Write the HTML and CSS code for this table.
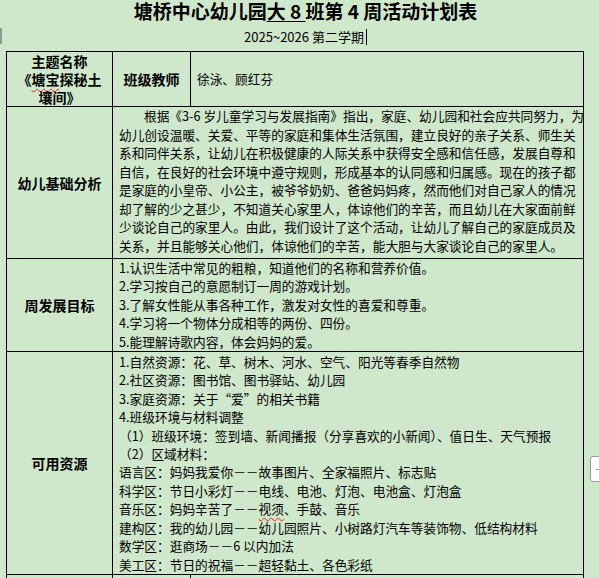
FILE: index.html
```html
<!DOCTYPE html>
<html lang="zh-CN">
<head>
<meta charset="utf-8">
<title>塘桥中心幼儿园大8班第4周活动计划表</title>
<link rel="stylesheet" href="styles.css">
</head>
<body>
<div class="page">
  <span class="edge-mark"></span>
  <header class="head">
    <h1 class="title">塘桥中心幼儿园<u>大 8 </u>班第 4 周活动计划表</h1>
    <div class="sub">2025~2026 第二学期<span class="caret"></span></div>
  </header>
  <table class="plan">
    <colgroup>
      <col class="c1"><col class="c2"><col class="c3">
    </colgroup>
    <tr class="r1">
      <td class="label">主题名称<br>《<span class="spell">塘宝</span>探秘土<br>壤间》</td>
      <td class="label">班级教师</td>
      <td class="plain">徐泳、顾红芬</td>
    </tr>
    <tr class="r2">
      <td class="label">幼儿基础分析</td>
      <td class="para" colspan="2">
        <div class="ln indent">根据《3-6 岁儿童学习与发展指南》指出，家庭、幼儿园和社会应共同努力，为</div>
        <div class="ln">幼儿创设温暖、关爱、平等的家庭和集体生活氛围，建立良好的亲子关系、师生关</div>
        <div class="ln">系和同伴关系，让幼儿在积极健康的人际关系中获得安全感和信任感，发展自尊和</div>
        <div class="ln">自信，在良好的社会环境中遵守规则，形成基本的认同感和归属感。现在的孩子都</div>
        <div class="ln">是家庭的小皇帝、小公主，被爷爷奶奶、爸爸妈妈疼，然而他们对自己家人的情况</div>
        <div class="ln">却了解的少之甚少，不知道关心家里人，体谅他们的辛苦，而且幼儿在大家面前鲜</div>
        <div class="ln">少谈论自己的家里人。由此，我们设计了这个活动，让幼儿了解自己的家庭成员及</div>
        <div class="ln">关系，并且能够关心他们，体谅他们的辛苦，能大胆与大家谈论自己的家里人。</div>
      </td>
    </tr>
    <tr class="r3">
      <td class="label">周发展目标</td>
      <td class="list" colspan="2">
        <div class="ln">1.认识生活中常见的粗粮，知道他们的名称和营养价值。</div>
        <div class="ln">2.学习按自己的意愿制订一周的游戏计划。</div>
        <div class="ln">3.了解女性能从事各种工作，激发对女性的喜爱和尊重。</div>
        <div class="ln">4.学习将一个物体分成相等的两份、四份。</div>
        <div class="ln">5.能理解诗歌内容，体会妈妈的爱。</div>
      </td>
    </tr>
    <tr class="r4">
      <td class="label">可用资源</td>
      <td class="list res" colspan="2">
        <div class="ln">1.自然资源：花、草、树木、河水、空气、阳光等春季自然物</div>
        <div class="ln">2.社区资源：图书馆、图书驿站、幼儿园</div>
        <div class="ln">3.家庭资源：关于“爱”的相关书籍</div>
        <div class="ln">4.班级环境与材料调整</div>
        <div class="ln">（1）班级环境：签到墙、新闻播报（分享喜欢的小新闻）、值日生、天气预报</div>
        <div class="ln">（2）区域材料：</div>
        <div class="ln">语言区：妈妈我爱你－－故事图片、全家福照片、标志贴</div>
        <div class="ln">科学区：节日小彩灯－－电线、电池、灯泡、电池盒、灯泡盒</div>
        <div class="ln">音乐区：妈妈辛苦了－－<span class="spell">视须</span>、手鼓、音乐</div>
        <div class="ln">建构区：我的幼儿园－－幼儿园照片、小树路灯汽车等装饰物、低结构材料</div>
        <div class="ln">数学区：逛商场－－6 以内加法</div>
        <div class="ln">美工区：节日的祝福－－超轻黏土、各色彩纸</div>
      </td>
    </tr>
    <tr class="r5">
      <td></td><td></td><td></td>
    </tr>
  </table>
  <div class="side-tab"><span></span></div>
</div>
</body>
</html>
```

FILE: styles.css
```css
html, body {
  margin: 0;
  padding: 0;
}
body {
  background: #cfe7cb;
  color: #000;
  font-family: "Noto Sans CJK SC", "Noto Sans", sans-serif;
}
.page {
  position: relative;
  width: 599px;
  height: 578px;
  overflow: hidden;
}
.edge-mark {
  position: absolute;
  left: 0;
  top: 28px;
  width: 2px;
  height: 16px;
  background: #8f9a8d;
}
.head {
  padding-left: 12px;
  text-align: center;
}
.title {
  margin: 0;
  padding-top: 1px;
  font-size: 19px;
  font-weight: 700;
  line-height: 20px;
}
.title u {
  text-decoration: underline;
  text-decoration-thickness: 1px;
  text-underline-offset: 2px;
}
.sub {
  margin-top: 7px;
  font-size: 13px;
  line-height: 18px;
}
.caret {
  display: inline-block;
  width: 1px;
  height: 16px;
  margin-left: 2px;
  background: #000;
  vertical-align: -3px;
}
.plan {
  margin: 5px 0 0 6px;
  border-collapse: collapse;
  table-layout: fixed;
  width: 577px;
}
.c1 { width: 106px; }
.c2 { width: 78px; }
.c3 { width: 393px; }
.plan td {
  border: 1px solid #000;
  padding: 0 6px;
  font-size: 12.7px;
  line-height: 18.4px;
  vertical-align: top;
  overflow: hidden;
}
.r1 { height: 55px; }
.r2 { height: 152px; }
.r3 { height: 93px; }
.r4 { height: 223px; }
.r5 { height: 30px; }
.plan td.label {
  padding: 0 2px;
  font-size: 14px;
  font-weight: 700;
  line-height: 18px;
  text-align: center;
  vertical-align: middle;
}
.plan td.plain {
  vertical-align: middle;
}
.plan td.para {
  padding-top: 0;
  line-height: 18.5px;
}
.plan td.res {
  padding-top: 1px;
}
.ln {
  white-space: nowrap;
}
.indent {
  text-indent: 25px;
}
.spell {
  text-decoration: underline wavy #e02020;
  text-decoration-thickness: 1px;
  text-underline-offset: 3px;
}
.side-tab {
  position: absolute;
  left: 590px;
  top: 456px;
  width: 20px;
  height: 26px;
  background: #fff;
  border: 1px solid #9a9a9a;
  border-radius: 3px;
  box-sizing: border-box;
}
.side-tab span {
  position: absolute;
  left: 5px;
  top: 12px;
  width: 4px;
  height: 1px;
  background: #8a8a8a;
}
```
